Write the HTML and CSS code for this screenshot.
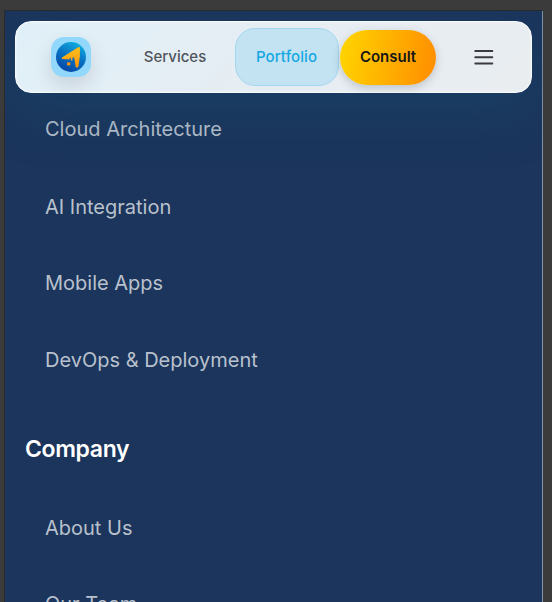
FILE: index.html
```html
<!DOCTYPE html>
<html lang="en">
<head>
<meta charset="utf-8">
<title>Portfolio</title>
<link rel="stylesheet" href="styles.css">
</head>
<body>
<div class="screen">
  <header class="nav">
    <a class="logo" aria-label="Home">
      <svg width="30" height="30" viewBox="0 0 30 30">
        <defs>
          <linearGradient id="disc" x1="0.75" y1="0" x2="0.3" y2="1"><stop offset="0" stop-color="#10b0e0"/><stop offset=".5" stop-color="#0870c2"/><stop offset="1" stop-color="#0646a5"/></linearGradient>
          <linearGradient id="arrow" x1="0" y1="0" x2="0" y2="1"><stop offset="0" stop-color="#ffc21c"/><stop offset="1" stop-color="#ff930c"/></linearGradient>
        </defs>
        <circle cx="15" cy="15" r="15" fill="url(#disc)"/>
        <path d="M6 15.4 22.2 5.2Q23.8 4.5 23.9 6.2V14L22.5 24.3Q21.6 26.4 19.7 25L18.3 16.2 16.8 14.8 16.2 18.5H15L14.5 15.2 13 17.5H11.5L11 16.5 9.7 17.8 8.5 17 6.2 17Q5 16.2 6 15.4Z" fill="url(#arrow)"/>
        <rect x="11" y="20.3" width="3.3" height="3.2" rx="1" fill="#ff930c"/>
      </svg>
    </a>
    <a class="link">Services</a>
    <a class="link active">Portfolio</a>
    <a class="consult">Consult</a>
    <button class="menu" aria-label="Menu"><svg width="20" height="16" viewBox="0 0 20 16" stroke="#3a3a40" stroke-width="2" stroke-linecap="round"><path d="M1.3 2H18.3M1.3 8.3H18.3M1.3 14.5H18.3"/></svg></button>
  </header>
  <main class="content">
    <ul class="list">
      <li>Cloud Architecture</li>
      <li class="tall">AI Integration</li>
      <li>Mobile Apps</li>
      <li>DevOps &amp; Deployment</li>
    </ul>
    <h2 class="heading">Company</h2>
    <ul class="list">
      <li class="tall">About Us</li>
      <li>Our Team</li>
    </ul>
  </main>
</div>
</body>
</html>
```
FILE: styles.css
```css
* { box-sizing: border-box; }
body {
  margin: 0;
  height: 602px;
  overflow: hidden;
  padding: 10px 9px 0 4px;
  background: #3b3b3b;
  font-family: Inter, "Liberation Sans", sans-serif;
}
.screen {
  position: relative;
  height: 592px;
  overflow: hidden;
  border: 1px solid #2b2b2b;
  border-right: 0;
  border-bottom: 0;
  background: #1b355c;
  box-shadow: inset -1px 0 #8292a8;
}
.nav {
  position: absolute;
  top: 10px;
  left: 10px;
  z-index: 1;
  display: flex;
  align-items: center;
  width: 517.4px;
  height: 72.4px;
  padding-left: 35px;
  border: 1px solid #f6f9fb;
  border-radius: 16px;
  background: linear-gradient(135deg, #e0f0f8, #e6edf3 50%, #e9edf0);
  box-shadow: 0 20px 50px rgba(26, 80, 115, .35), inset 0 0 2px #fff;
}
.logo {
  display: flex;
  align-items: center;
  justify-content: center;
  width: 40px;
  height: 40px;
  border-radius: 13px;
  background: #91d8fc;
  box-shadow: 0 8px 18px rgba(60, 70, 75, .16);
}
.link {
  display: flex;
  align-items: center;
  justify-content: center;
  width: 104px;
  height: 58px;
  margin-left: 32px;
  padding-bottom: 2px;
  border: 1px solid transparent;
  border-radius: 20px;
  color: #50545b;
  font-size: 15px;
  font-weight: 500;
}
.active {
  margin-left: 8px;
  padding-right: 1px;
  border-color: #a4d8ee;
  background: #c3e2f2;
  color: #13a8e2;
  letter-spacing: .1px;
}
.consult {
  display: flex;
  align-items: center;
  justify-content: center;
  width: 96px;
  height: 55px;
  margin-left: 1px;
  padding-bottom: 2px;
  border-radius: 28px;
  background: linear-gradient(100deg, #ffd600, #ff8c00);
  box-shadow: 0 3px 8px rgba(40, 50, 65, .22);
  color: #161616;
  font-size: 15px;
  font-weight: 600;
}
.menu {
  display: flex;
  margin-left: 38px;
  padding: 0;
  border: 0;
  background: none;
}
.content { padding: 80px 20px 0; }
.list {
  margin: 0;
  padding: 0 0 0 20px;
  list-style: none;
  color: #b9c1cd;
  font-size: 20px;
  line-height: 77px;
}
.tall { height: 76px; padding-top: 1px; }
.tall + li { margin-top: 1px; }
.heading {
  margin: 0;
  padding: 11px 0 1px;
  color: #fff;
  font-size: 23px;
  font-weight: 600;
  line-height: 78px;
  letter-spacing: -.35px;
}
```
